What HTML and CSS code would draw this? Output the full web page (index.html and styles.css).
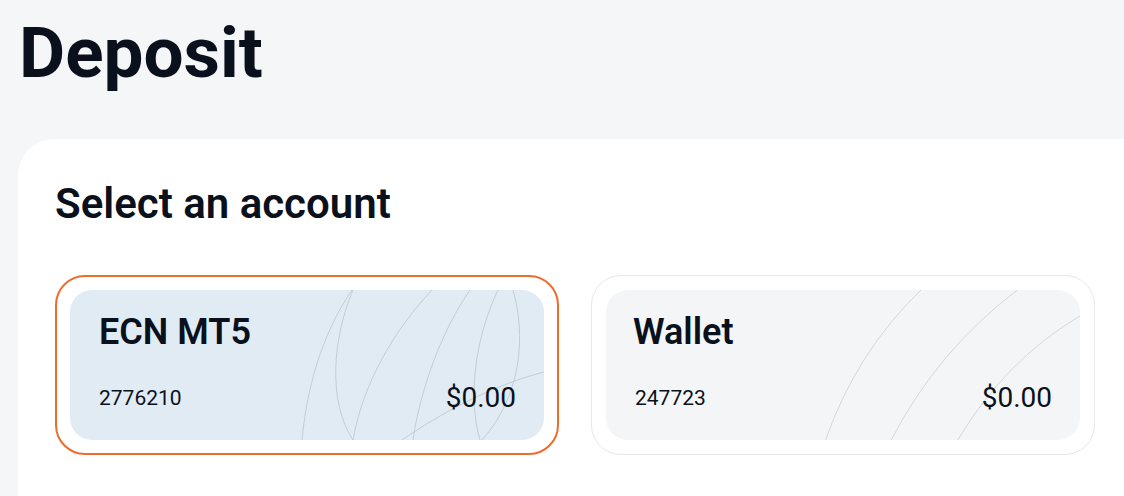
FILE: index.html
```html
<!DOCTYPE html>
<html lang="en">
<head>
    <meta charset="UTF-8">
    <meta name="viewport" content="width=device-width, initial-scale=1.0">
    <title>Deposit</title>
    <link rel="stylesheet" href="styles.css">
</head>
<body>
    <h1 class="page-title">Deposit</h1>

    <section class="panel">
        <h2 class="panel-title">Select an account</h2>

        <div class="accounts">
            <div class="account selected">
                <div class="account-inner">
                    <svg class="account-lines" viewBox="0 0 474 150" preserveAspectRatio="none">
                        <path d="M232 150 C 238 85, 258 35, 282 0"/>
                        <path d="M283 0 C 262 50, 258 112, 283 150"/>
                        <path d="M283 150 C 293 92, 326 38, 362 0"/>
                        <path d="M400 0 C 372 40, 350 100, 343 150"/>
                        <path d="M428 0 C 404 50, 398 110, 410 150"/>
                        <path d="M443 0 C 456 45, 452 105, 412 150"/>
                        <path d="M332 150 C 370 124, 420 96, 474 82"/>
                    </svg>
                    <div class="account-name">ECN MT5</div>
                    <div class="account-row">
                        <span class="account-number">2776210</span>
                        <span class="account-balance">$0.00</span>
                    </div>
                </div>
            </div>

            <div class="account">
                <div class="account-inner">
                    <svg class="account-lines light" viewBox="0 0 477 150" preserveAspectRatio="none">
                        <path d="M221 150 Q 252 62, 317 0"/>
                        <path d="M287 150 Q 334 60, 414 0"/>
                        <path d="M354 150 Q 402 70, 477 26"/>
                    </svg>
                    <div class="account-name">Wallet</div>
                    <div class="account-row">
                        <span class="account-number">247723</span>
                        <span class="account-balance">$0.00</span>
                    </div>
                </div>
            </div>
        </div>
    </section>
</body>
</html>
```

FILE: styles.css
```css
body {
    margin: 0;
    padding-left: 18px;
    background-color: #f5f6f8;
    font-family: Roboto, "Liberation Sans", sans-serif;
    color: #0a111c;
    overflow: hidden;
}
.page-title {
    margin: 11px 0 0 1px;
    font-size: 71px;
    font-weight: 700;
    line-height: normal;
}
.panel {
    box-sizing: border-box;
    margin-top: 45px;
    min-height: 357px;
    padding: 40px 0 0 37px;
    background-color: #ffffff;
    border-top-left-radius: 36px;
}
.panel-title {
    margin: 0 0 47px;
    font-size: 42px;
    font-weight: 600;
    line-height: normal;
}
.accounts {
    display: grid;
    grid-template-columns: 504px 504px;
    gap: 32px;
}
.account {
    padding: 14px;
    border: 1px solid #e6e8eb;
    border-radius: 30px;
}
.account.selected {
    padding: 13px;
    border: 2px solid #ee6b2e;
}
.account-inner {
    position: relative;
    overflow: hidden;
    display: flex;
    flex-direction: column;
    gap: 28px;
    padding: 21px 28px 26px 29px;
    border-radius: 22px;
    background-color: #f4f5f7;
}
.selected .account-inner {
    background-color: #e1ebf4;
}
.account-lines {
    position: absolute;
    top: 0;
    left: 0;
    width: 100%;
    height: 100%;
    fill: none;
    stroke: #c4ccd5;
    stroke-width: 1;
}
.account-lines.light {
    stroke: #d3d7dc;
}
.account-name {
    position: relative;
    font-size: 36px;
    font-weight: 600;
    line-height: normal;
}
.account + .account .account-name {
    margin-left: -2px;
}
.account-row {
    position: relative;
    display: flex;
    align-items: center;
    justify-content: space-between;
}
.account-number {
    font-size: 21px;
}
.account-balance {
    font-size: 28px;
}
```
